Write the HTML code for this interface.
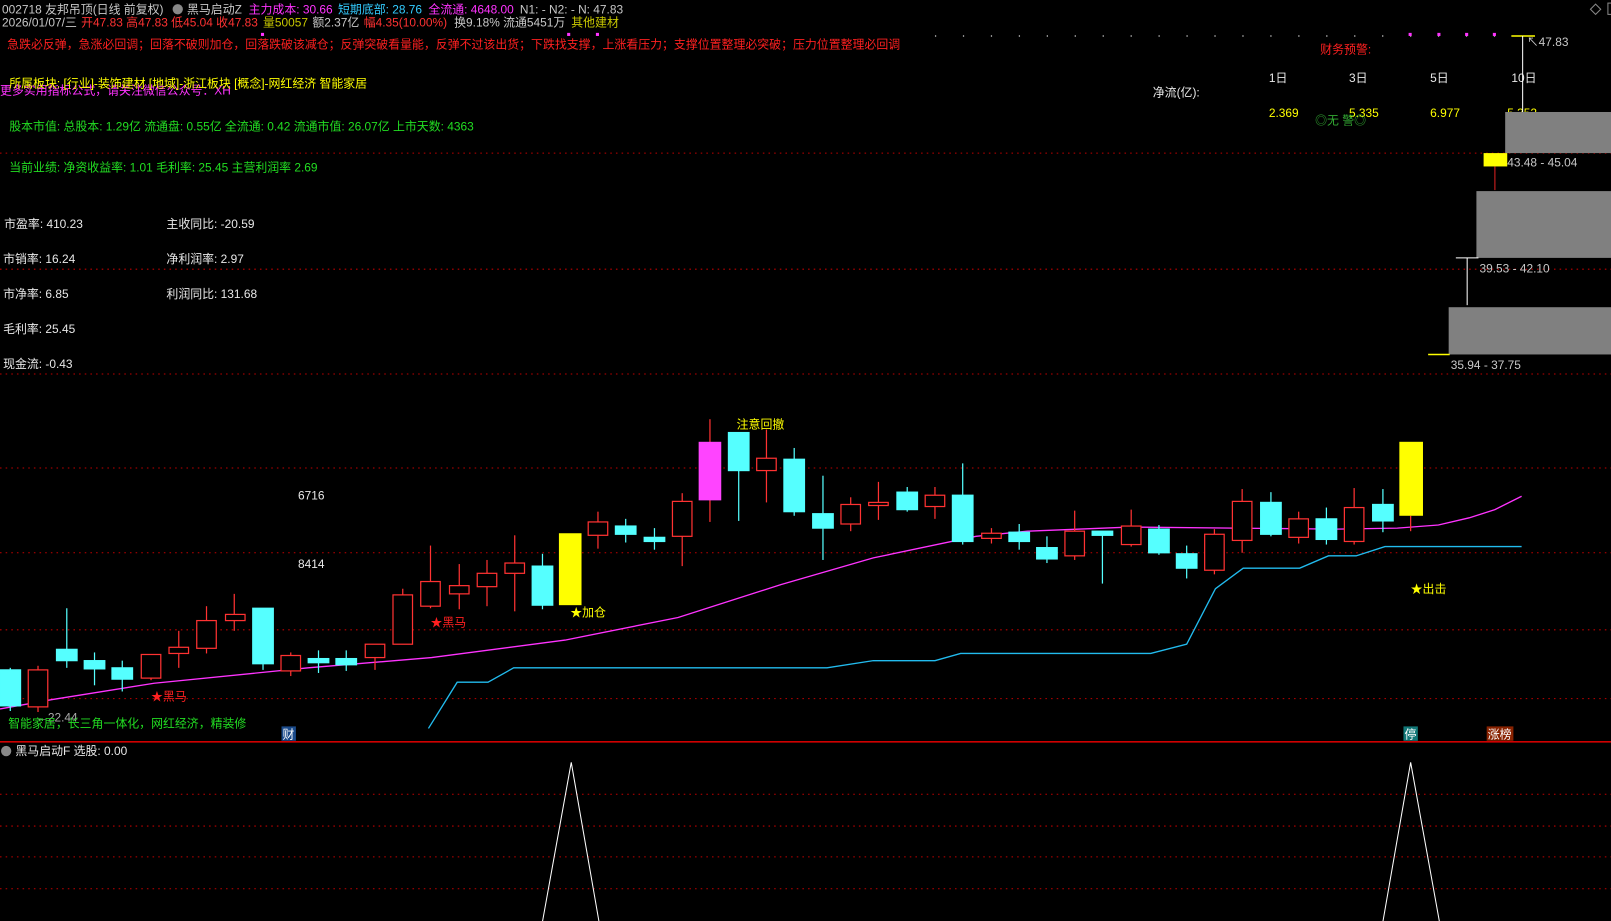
<!DOCTYPE html>
<html><head><meta charset="utf-8"><style>
html,body{margin:0;padding:0;background:#000;width:1611px;height:921px;overflow:hidden}
svg{display:block}
text{font-family:"Liberation Sans","Noto Sans CJK SC",sans-serif;font-size:11.6px}
</style></head><body>
<svg width="1611" height="921" viewBox="0 0 1568 896.4" preserveAspectRatio="none" xmlns="http://www.w3.org/2000/svg">
<rect width="1568" height="897" fill="#000"/>
<g stroke="#c00000" stroke-width="1" stroke-dasharray="1.5,4">
<line x1="0" y1="149" x2="1568" y2="149"/>
<line x1="0" y1="262" x2="1568" y2="262"/>
<line x1="0" y1="364" x2="1568" y2="364"/>
<line x1="0" y1="455.5" x2="1568" y2="455.5"/>
<line x1="0" y1="538" x2="1568" y2="538"/>
<line x1="0" y1="613" x2="1568" y2="613"/>
<line x1="0" y1="680" x2="1568" y2="680"/>
<line x1="0" y1="773" x2="1568" y2="773"/>
<line x1="0" y1="804" x2="1568" y2="804"/>
<line x1="0" y1="834" x2="1568" y2="834"/>
<line x1="0" y1="865" x2="1568" y2="865"/>
</g>
<line x1="910" y1="35" x2="1480" y2="35" stroke="#ddd" stroke-width="1.2" stroke-dasharray="1.2,26"/>
<g fill="#ff33ff"><rect x="254" y="32" width="3" height="3"/><rect x="552" y="32" width="3" height="3"/><rect x="580" y="32" width="3" height="3"/><rect x="1371" y="32" width="3" height="3"/><rect x="1399" y="32" width="3" height="3"/><rect x="1426" y="32" width="3" height="3"/><rect x="1453" y="32" width="3" height="3"/></g>
<line x1="0" y1="722" x2="1568" y2="722" stroke="#d00000" stroke-width="1.5"/>

<text x="2" y="13" fill="#c8c8c8">002718 友邦吊顶(日线 前复权)</text>
<circle cx="173" cy="9" r="5" fill="#888"/>
<text x="182" y="13" fill="#c8c8c8">黑马启动Z</text>
<text x="242" y="13" fill="#ff33ff">主力成本: 30.66</text>
<text x="329" y="13" fill="#33ccff">短期底部: 28.76</text>
<text x="417" y="13" fill="#ff33ff">全流通: 4648.00</text>
<text x="506" y="13" fill="#c8c8c8">N1: -  N2: -  N: 47.83</text>
<text x="2" y="26" fill="#c8c8c8">2026/01/07/三</text>
<text x="79" y="26" fill="#ff3232">开47.83 高47.83 低45.04 收47.83</text>
<text x="256" y="26" fill="#c8c800">量50057</text>
<text x="304" y="26" fill="#c8c8c8">额2.37亿</text>
<text x="354" y="26" fill="#ff3232">幅4.35(10.00%)</text>
<text x="442" y="26" fill="#c8c8c8">换9.18% 流通5451万</text>
<text x="556" y="26" fill="#c8c800">其他建材</text>
<path d="M1548 9 L1553 4 L1558 9 L1553 14 Z" fill="none" stroke="#888"/>
<rect x="1565" y="3" width="4" height="11" fill="none" stroke="#888"/>

<text x="7" y="47" fill="#ff2020">急跌必反弹，急涨必回调；回落不破则加仓，回落跌破该减仓；反弹突破看量能，反弹不过该出货；下跌找支撑，上涨看压力；支撑位置整理必突破；压力位置整理必回调</text>
<text x="1285" y="52" fill="#ff2020">财务预警:</text>
<text x="0" y="92" fill="#ff33ff">更多实用指标公式，请关注微信公众号：XH</text>
<text x="9" y="85" fill="#ffff00">所属板块: [行业]-装饰建材 [地域]-浙江板块 [概念]-网红经济 智能家居</text>
<text x="9" y="127" fill="#22dd22">股本市值: 总股本: 1.29亿 流通盘: 0.55亿 全流通: 0.42 流通市值: 26.07亿 上市天数: 4363</text>
<text x="9" y="167" fill="#22dd22">当前业绩: 净资收益率: 1.01 毛利率: 25.45 主营利润率 2.69</text>
<g fill="#e8e8e8">
<text x="4" y="222">市盈率: 410.23</text><text x="162" y="222">主收同比: -20.59</text>
<text x="3" y="256">市销率: 16.24</text><text x="162" y="256">净利润率: 2.97</text>
<text x="3" y="290">市净率: 6.85</text><text x="162" y="290">利润同比: 131.68</text>
<text x="3" y="324">毛利率: 25.45</text>
<text x="3" y="358">现金流: -0.43</text>
</g>
<g fill="#e8e8e8"><text x="1235" y="80">1日</text><text x="1313" y="80">3日</text><text x="1392" y="80">5日</text><text x="1471" y="80">10日</text><text x="1122" y="94">净流(亿):</text></g>
<g fill="#ffff00"><text x="1235" y="114">2.369</text><text x="1313" y="114">5.335</text><text x="1392" y="114">6.977</text><text x="1467" y="114">5.352</text></g>
<text x="1280" y="121" fill="#33aa33">◎无 警◎</text>
<rect x="1465" y="109" width="103" height="40" fill="#808080"/>
<rect x="1444" y="149" width="23" height="13" fill="#ffff00"/>
<line x1="1455" y1="162" x2="1455" y2="185" stroke="#dd2222"/>
<rect x="1437" y="186" width="131" height="65" fill="#808080"/>
<rect x="1410" y="299" width="158" height="46" fill="#808080"/>
<line x1="1471" y1="35" x2="1494" y2="35" stroke="#ffff00" stroke-width="1.5"/>
<line x1="1482" y1="35" x2="1482" y2="109" stroke="#fff"/>
<line x1="1417" y1="251" x2="1439" y2="251" stroke="#fff"/>
<line x1="1428" y1="251" x2="1428" y2="297" stroke="#fff"/>
<line x1="1390" y1="345" x2="1411" y2="345" stroke="#ffff00" stroke-width="1.5"/>
<g fill="#c8c8c8"><text x="1486" y="45">↖47.83</text><text x="1467" y="162">43.48 - 45.04</text><text x="1440" y="265">39.53 - 42.10</text><text x="1412" y="359">35.94 - 37.75</text></g>

<polyline fill="none" stroke="#ff33ff" stroke-width="1.3" points="0,690 50,681 150,665 300,650 420,640 550,623 660,601 760,569 850,543 950,522 1000,517 1100,513 1300,515 1360,514 1400,511 1430,504 1455,496 1481,483"/>
<polyline fill="none" stroke="#22bbee" stroke-width="1.3" points="417,709 445,664 475,664 500,650 805,650 850,643 910,643 935,636 1120,636 1155,627 1183,573 1210,553 1265,553 1293,541 1320,541 1348,532 1481,532"/>

<g stroke-width="1.2">
<g stroke="#55ffff" fill="#55ffff">
<line x1="10" y1="650" x2="10" y2="692"/><rect x="0" y="652" width="20" height="35"/>
<line x1="65" y1="592" x2="65" y2="650"/><rect x="55" y="632" width="20" height="11"/>
<line x1="92" y1="635" x2="92" y2="667"/><rect x="82" y="643" width="20" height="8"/>
<line x1="119" y1="643" x2="119" y2="673"/><rect x="109" y="650" width="20" height="11"/>
<line x1="256" y1="592" x2="256" y2="652"/><rect x="246" y="592" width="20" height="54"/>
<line x1="310" y1="633" x2="310" y2="655"/><rect x="300" y="641" width="20" height="4"/>
<line x1="337" y1="633" x2="337" y2="653"/><rect x="327" y="641" width="20" height="6"/>
<line x1="528" y1="539" x2="528" y2="593"/><rect x="518" y="551" width="20" height="38"/>
<line x1="609" y1="505" x2="609" y2="528"/><rect x="599" y="512" width="20" height="8"/>
<line x1="637" y1="514" x2="637" y2="535"/><rect x="627" y="523" width="20" height="4"/>
<line x1="719" y1="421" x2="719" y2="507"/><rect x="709" y="421" width="20" height="37"/>
<line x1="773" y1="436" x2="773" y2="502"/><rect x="763" y="447" width="20" height="51"/>
<line x1="801" y1="463" x2="801" y2="545"/><rect x="791" y="500" width="20" height="14"/>
<line x1="883" y1="474" x2="883" y2="498"/><rect x="873" y="479" width="20" height="17"/>
<line x1="937" y1="451" x2="937" y2="530"/><rect x="927" y="482" width="20" height="45"/>
<line x1="992" y1="510" x2="992" y2="535"/><rect x="982" y="518" width="20" height="9"/>
<line x1="1019" y1="522" x2="1019" y2="548"/><rect x="1009" y="533" width="20" height="11"/>
<line x1="1073" y1="517" x2="1073" y2="568"/><rect x="1063" y="517" width="20" height="4"/>
<line x1="1128" y1="511" x2="1128" y2="540"/><rect x="1118" y="515" width="20" height="23"/>
<line x1="1155" y1="531" x2="1155" y2="563"/><rect x="1145" y="539" width="20" height="14"/>
<line x1="1237" y1="479" x2="1237" y2="522"/><rect x="1227" y="489" width="20" height="31"/>
<line x1="1291" y1="494" x2="1291" y2="530"/><rect x="1281" y="505" width="20" height="20"/>
<line x1="1346" y1="476" x2="1346" y2="518"/><rect x="1336" y="491" width="20" height="16"/>
</g>
<g stroke="#ff3232" fill="#000">
<line x1="37" y1="648" x2="37" y2="693"/><rect x="27.5" y="652" width="19" height="36"/>
<line x1="147" y1="637" x2="147" y2="662"/><rect x="137.5" y="637" width="19" height="23"/>
<line x1="174" y1="614" x2="174" y2="650"/><rect x="164.5" y="630" width="19" height="6"/>
<line x1="201" y1="590" x2="201" y2="636"/><rect x="191.5" y="604" width="19" height="27"/>
<line x1="228" y1="578" x2="228" y2="614"/><rect x="219.5" y="598" width="19" height="6"/>
<line x1="283" y1="635" x2="283" y2="658"/><rect x="273.5" y="638" width="19" height="15"/>
<line x1="365" y1="627" x2="365" y2="652"/><rect x="355.5" y="627" width="19" height="13"/>
<line x1="392" y1="573" x2="392" y2="627"/><rect x="382.5" y="579" width="19" height="48"/>
<line x1="419" y1="531" x2="419" y2="592"/><rect x="409.5" y="566" width="19" height="24"/>
<line x1="447" y1="549" x2="447" y2="593"/><rect x="437.5" y="570" width="19" height="8"/>
<line x1="474" y1="545" x2="474" y2="590"/><rect x="464.5" y="558" width="19" height="13"/>
<line x1="501" y1="521" x2="501" y2="595"/><rect x="491.5" y="548" width="19" height="10"/>
<line x1="582" y1="498" x2="582" y2="534"/><rect x="572.5" y="508" width="19" height="13"/>
<line x1="664" y1="480" x2="664" y2="551"/><rect x="654.5" y="488" width="19" height="34"/>
<line x1="691" y1="408" x2="691" y2="508"/>
<line x1="746" y1="418" x2="746" y2="489"/><rect x="736.5" y="446" width="19" height="12"/>
<line x1="828" y1="484" x2="828" y2="517"/><rect x="818.5" y="491" width="19" height="19"/>
<line x1="855" y1="469" x2="855" y2="506"/><rect x="845.5" y="489" width="19" height="3"/>
<line x1="910" y1="474" x2="910" y2="505"/><rect x="900.5" y="482" width="19" height="11"/>
<line x1="965" y1="514" x2="965" y2="529"/><rect x="955.5" y="519" width="19" height="5"/>
<line x1="1046" y1="497" x2="1046" y2="545"/><rect x="1036.5" y="517" width="19" height="24"/>
<line x1="1101" y1="496" x2="1101" y2="532"/><rect x="1091.5" y="512" width="19" height="18"/>
<line x1="1182" y1="515" x2="1182" y2="559"/><rect x="1172.5" y="520" width="19" height="35"/>
<line x1="1209" y1="476" x2="1209" y2="538"/><rect x="1199.5" y="488" width="19" height="38"/>
<line x1="1264" y1="498" x2="1264" y2="529"/><rect x="1254.5" y="505" width="19" height="18"/>
<line x1="1318" y1="475" x2="1318" y2="530"/><rect x="1308.5" y="494" width="19" height="33"/>
<line x1="1373" y1="502" x2="1373" y2="517"/>
</g>
<rect x="680" y="430" width="22" height="57" fill="#ff44ff"/>
<rect x="544" y="519" width="22" height="70" fill="#ffff00"/>
<rect x="1362" y="430" width="23" height="72" fill="#ffff00"/>
</g>

<text x="147" y="682" fill="#ff2020">★黑马</text>
<text x="419" y="610" fill="#ff2020">★黑马</text>
<text x="555" y="600" fill="#ffff00">★加仓</text>
<text x="717" y="417" fill="#ffff00">注意回撤</text>
<text x="1373" y="577" fill="#ffff00">★出击</text>
<text x="290" y="486" fill="#e8e8e8">6716</text>
<text x="290" y="553" fill="#e8e8e8">8414</text>
<text x="35" y="702" fill="#aaa">←22.44</text>
<text x="8" y="708" fill="#22dd22">智能家居，长三角一体化，网红经济，精装修</text>
<rect x="274" y="707" width="14" height="14" fill="#1a4a8a"/><text x="275" y="719" fill="#fff">财</text>
<rect x="1366" y="707" width="14" height="14" fill="#117777"/><text x="1367" y="719" fill="#fff">停</text>
<rect x="1447" y="707" width="26" height="14" fill="#882200"/><text x="1448" y="719" fill="#fff">涨榜</text>

<circle cx="6" cy="731" r="5" fill="#888"/>
<text x="15" y="735" fill="#e8e8e8">黑马启动F  选股: 0.00</text>
<polyline fill="none" stroke="#fff" stroke-width="1" points="528,897 556,742 583,897"/>
<polyline fill="none" stroke="#fff" stroke-width="1" points="1346,897 1373,742 1401,897"/>
</svg>
</body></html>
